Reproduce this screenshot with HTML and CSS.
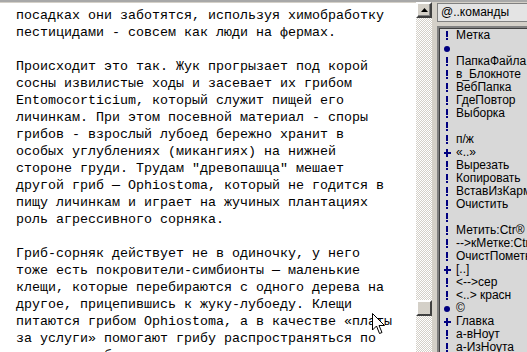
FILE: index.html
```html
<!DOCTYPE html>
<html>
<head>
<meta charset="utf-8">
<link rel="stylesheet" href="styles.css">
</head>
<body>
<div class="window">
  <div class="topband"></div>
  <div class="main">
    <div class="editor">
<pre class="text">посадках они заботятся, используя химобработку
пестицидами - совсем как люди на фермах.

Происходит это так. Жук прогрызает под корой
сосны извилистые ходы и засевает их грибом
Entomocorticium, который служит пищей его
личинкам. При этом посевной материал - споры
грибов - взрослый лубоед бережно хранит в
особых углублениях (микангиях) на нижней
стороне груди. Трудам "древопашца" мешает
другой гриб — Ophiostoma, который не годится в
пищу личинкам и играет на жучиных плантациях
роль агрессивного сорняка.

Гриб-сорняк действует не в одиночку, у него
тоже есть покровители-симбионты — маленькие
клещи, которые перебираются с одного дерева на
другое, прицепившись к жуку-лубоеду. Клещи
питаются грибом Ophiostoma, а в качестве «платы
за услуги» помогают грибу распространяться по
деревьям, обеспечивая его перенос.</pre>
      <svg class="cursor" width="14" height="22" viewBox="0 0 14 22"><path d="M0.5 0.5 L0.5 17 L4.5 13 L7.5 20.5 L10 19.5 L7 12.5 L12.5 12.5 Z" fill="#fff" stroke="#000" stroke-width="1"/></svg>
    </div>
    <div class="scrollbar">
      <div class="sb-btn"><svg width="7" height="4" viewBox="0 0 7 4"><path d="M3.5 0 L7 4 L0 4 Z" fill="#000"/></svg></div>
      <div class="sb-track"><div class="sb-thumb"></div></div>
    </div>
    <div class="side">
      <div class="combo">@..команды</div>
      <div class="list">
        <div class="item"><i class="ic ex"></i><span>Метка</span></div>
        <div class="item"><i class="ic dot"></i><span></span></div>
        <div class="item"><i class="ic ex"></i><span>ПапкаФайла</span></div>
        <div class="item"><i class="ic ex"></i><span>в_Блокноте</span></div>
        <div class="item"><i class="ic ex"></i><span>ВебПапка</span></div>
        <div class="item"><i class="ic ex"></i><span>ГдеПовтор</span></div>
        <div class="item"><i class="ic ex"></i><span>Выборка</span></div>
        <div class="item"><i class="ic ex"></i><span></span></div>
        <div class="item"><i class="ic ex"></i><span>п/ж</span></div>
        <div class="item"><i class="ic plus"></i><span>«..»</span></div>
        <div class="item"><i class="ic ex"></i><span>Вырезать</span></div>
        <div class="item"><i class="ic ex"></i><span>Копировать</span></div>
        <div class="item"><i class="ic ex"></i><span>ВставИзКарман</span></div>
        <div class="item"><i class="ic ex"></i><span>Очистить</span></div>
        <div class="item"><i class="ic ex"></i><span></span></div>
        <div class="item"><i class="ic ex"></i><span>Метить:Ctr®</span></div>
        <div class="item"><i class="ic ex"></i><span>--&gt;кМетке:Ctr-</span></div>
        <div class="item"><i class="ic ex"></i><span>ОчистПометки</span></div>
        <div class="item"><i class="ic plus"></i><span>[..]</span></div>
        <div class="item"><i class="ic ex"></i><span>&lt;--&gt;сер</span></div>
        <div class="item"><i class="ic ex"></i><span>&lt;..&gt; красн</span></div>
        <div class="item"><i class="ic dot"></i><span>©</span></div>
        <div class="item"><i class="ic plus"></i><span>Главка</span></div>
        <div class="item"><i class="ic ex"></i><span>а-вНоут</span></div>
        <div class="item"><i class="ic ex"></i><span>а-ИзНоута</span></div>
      </div>
    </div>
  </div>
</div>
</body>
</html>
```
FILE: styles.css
```css
html, body {
  margin: 0;
  padding: 0;
  width: 527px;
  height: 352px;
  overflow: hidden;
  background: #d4d0c8;
}
.window {
  display: flex;
  flex-direction: column;
  height: 352px;
}
.topband {
  height: 2px;
  background: #a8a8a8;
  border-bottom: 1px solid #d4d0c8;
}
.main {
  display: flex;
  flex: 1;
  min-height: 0;
}
.editor {
  position: relative;
  width: 400px;
  padding-left: 16px;
  background: #fff;
  overflow: hidden;
}
.text {
  margin: 4px 0 0 0;
  font-family: "Liberation Mono", "Courier New", monospace;
  font-size: 13.333px;
  line-height: 17px;
  color: #000;
  white-space: pre;
}
.cursor {
  position: absolute;
  left: 372px;
  top: 310px;
}
.scrollbar {
  width: 16px;
  display: flex;
  flex-direction: column;
}
.sb-btn {
  width: 12px;
  height: 12px;
  background: #d4d0c8;
  border: 2px solid;
  border-color: #fff #404040 #404040 #fff;
  box-shadow: inset -1px -1px 0 #808080, inset 1px 1px 0 #d4d0c8;
  display: flex;
  align-items: center;
  justify-content: center;
  margin-top: -1px;
}
.sb-track {
  flex: 1;
  background-color: #fff;
  background-image: repeating-conic-gradient(#d4d0c8 0 25%, #fff 0 50%);
  background-size: 2px 2px;
}
.sb-thumb {
  margin-top: 282px;
  width: 12px;
  height: 12px;
  background: #d4d0c8;
  border: 2px solid;
  border-color: #fff #404040 #404040 #fff;
}
.side {
  flex: 1;
  display: flex;
  flex-direction: column;
  gap: 4px;
  padding-left: 5px;
  padding-top: 0;
  overflow: hidden;
}
.combo {
  height: 17px;
  border: 1px solid #808080;
  border-right: none;
  background: #e4e4e4;
  font-family: "Liberation Sans", Arial, sans-serif;
  font-size: 12px;
  line-height: 17px;
  padding-left: 3px;
  white-space: nowrap;
}
.list {
  flex: 1;
  border-left: 2px solid;
  border-top: 2px solid;
  border-color: #808080;
  box-shadow: inset 1px 1px 0 #404040;
  background: #d8d8d8;
  padding-top: 1px;
  padding-left: 5px;
  font-family: "Liberation Sans", Arial, sans-serif;
  font-size: 12px;
  color: #000;
}
.item {
  display: flex;
  align-items: center;
  height: 13px;
  line-height: 13px;
  white-space: nowrap;
}
.ic {
  width: 12px;
  height: 13px;
  flex: none;
  position: relative;
  margin-right: 0;
}
.ic.ex::before {
  content: "";
  position: absolute;
  left: 2px;
  top: 2px;
  width: 2px;
  height: 6px;
  background: #000080;
}
.ic.ex::after {
  content: "";
  position: absolute;
  left: 2px;
  top: 9px;
  width: 2px;
  height: 2px;
  background: #000080;
}
.ic.dot::before {
  content: "";
  position: absolute;
  left: 0;
  top: 4px;
  width: 6px;
  height: 6px;
  border-radius: 50%;
  background: #000080;
}
.ic.plus::before {
  content: "";
  position: absolute;
  left: 0;
  top: 6px;
  width: 7px;
  height: 2px;
  background: #000080;
}
.ic.plus::after {
  content: "";
  position: absolute;
  left: 2px;
  top: 3px;
  width: 2px;
  height: 8px;
  background: #000080;
}
```
